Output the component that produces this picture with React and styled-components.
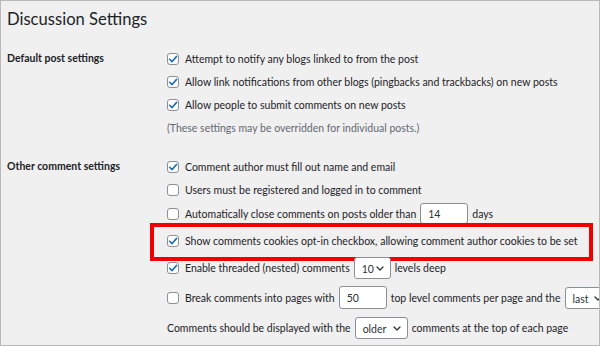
import { styled, createGlobalStyle } from "styled-components";

const GlobalStyle = createGlobalStyle`
  html, body {
    margin: 0;
    padding: 0;
    background: #ffffff;
  }
  *, *::before, *::after {
    box-sizing: border-box;
  }
`;

const Frame = styled.div`
  width: 600px;
  height: 346px;
  border: 1px solid #b9b9b9;
  background: #f0f0f0;
  overflow: hidden;
  padding: 0 0 0 6px;
  font-family: Lato, "Open Sans", sans-serif;
  font-size: 10.5px;
  color: #1d2327;
`;

const Title = styled.h1`
  margin: 0;
  padding-top: 6px;
  font-size: 16.6px;
  line-height: 24px;
  font-weight: 400;
  color: #1d2327;
`;

const Table = styled.div`
  display: grid;
  grid-template-columns: 160px 1fr;
  row-gap: 15px;
  margin-top: 16px;
`;

const Heading = styled.div`
  font-weight: 700;
  line-height: 23px;
`;

const Fields = styled.div`
  display: flex;
  flex-direction: column;
`;

const Line = styled.div`
  position: relative;
  display: flex;
  align-items: center;
  gap: 4px;
  height: ${(p) => p.$h || 23}px;
  white-space: nowrap;

  ${(p) =>
    p.$highlight &&
    `
    &::after {
      content: "";
      position: absolute;
      left: -17px;
      top: -3px;
      width: 443px;
      height: 38px;
      border: 4px solid #f00000;
      pointer-events: none;
    }
  `}
`;

const Note = styled.span`
  color: #646970;
`;

const Box = styled.span`
  display: inline-flex;
  align-items: center;
  justify-content: center;
  flex: none;
  width: 12px;
  height: 12px;
  margin-right: 2px;
  border: 1px solid #8c8f94;
  border-radius: 3px;
  background: #ffffff;
`;

const TextInput = styled.input`
  flex: none;
  width: 48px;
  height: ${(p) => p.$h || 22}px;
  padding: 0 7px;
  border: 1px solid #8c8f94;
  border-radius: 3px;
  background: #ffffff;
  font: inherit;
  color: #2c3338;
  outline: none;
`;

const Select = styled.div`
  flex: none;
  display: flex;
  align-items: center;
  justify-content: space-between;
  width: ${(p) => p.$w}px;
  height: 22px;
  padding: 2px 6px 0 7px;
  border: 1px solid #8c8f94;
  border-radius: 3px;
  background: #ffffff;
  color: #2c3338;
`;

function Check({ on }) {
  return (
    <Box>
      {on && (
        <svg width="10" height="10" viewBox="0 0 10 10">
          <path
            d="M1.6 5.2 L4 7.6 L8.6 2.4"
            fill="none"
            stroke="#2271b1"
            strokeWidth="1.6"
            strokeLinecap="round"
            strokeLinejoin="round"
          />
        </svg>
      )}
    </Box>
  );
}

function Dropdown({ value, w }) {
  return (
    <Select $w={w}>
      <span>{value}</span>
      <svg width="8" height="5" viewBox="0 0 8 5">
        <path
          d="M1 1 L4 4 L7 1"
          fill="none"
          stroke="#2c3338"
          strokeWidth="1.3"
          strokeLinecap="round"
          strokeLinejoin="round"
        />
      </svg>
    </Select>
  );
}

export default function App() {
  return (
    <Frame>
      <GlobalStyle />
      <Title>Discussion Settings</Title>
      <Table>
        <Heading>Default post settings</Heading>
        <Fields>
          <Line>
            <Check on />
            Attempt to notify any blogs linked to from the post
          </Line>
          <Line>
            <Check on />
            Allow link notifications from other blogs (pingbacks and trackbacks) on new posts
          </Line>
          <Line>
            <Check on />
            Allow people to submit comments on new posts
          </Line>
          <Line $h={24}>
            <Note>(These settings may be overridden for individual posts.)</Note>
          </Line>
        </Fields>

        <Heading>Other comment settings</Heading>
        <Fields>
          <Line>
            <Check on />
            Comment author must fill out name and email
          </Line>
          <Line>
            <Check />
            Users must be registered and logged in to comment
          </Line>
          <Line $h={25}>
            <Check />
            Automatically close comments on posts older than
            <TextInput $h={21} defaultValue="14" />
            days
          </Line>
          <Line $h={29} $highlight>
            <Check on />
            Show comments cookies opt-in checkbox, allowing comment author cookies to be set
          </Line>
          <Line $h={25}>
            <Check on />
            Enable threaded (nested) comments
            <Dropdown value="10" w={37} />
            levels deep
          </Line>
          <Line $h={35}>
            <Check />
            Break comments into pages with
            <TextInput $h={23} defaultValue="50" />
            top level comments per page and the
            <Dropdown value="last" w={44} />
          </Line>
          <Line $h={25}>
            Comments should be displayed with the
            <Dropdown value="older" w={53} />
            comments at the top of each page
          </Line>
        </Fields>
      </Table>
    </Frame>
  );
}
